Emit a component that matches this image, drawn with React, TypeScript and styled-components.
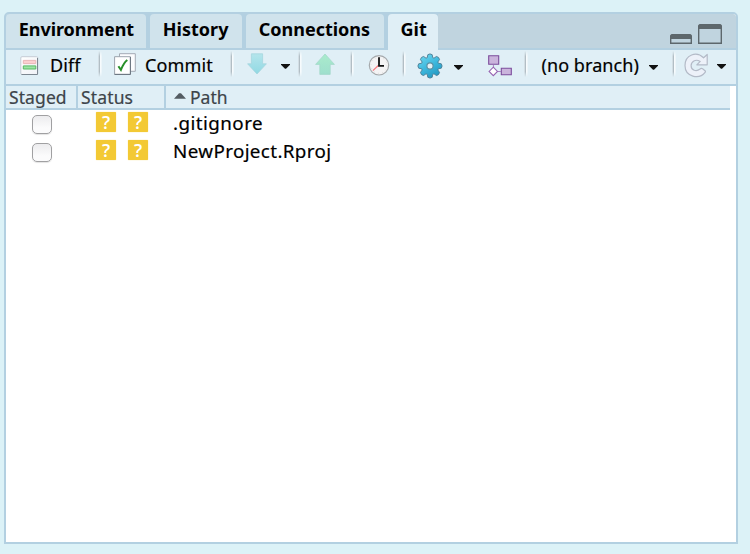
import React from "react";
import styled, { createGlobalStyle } from "styled-components";

const line = "#b3d0e1";
const pale = "#e0eff6";

const GlobalStyle = createGlobalStyle`
  * { box-sizing: border-box; }
  body { margin: 0; background: #dcf2f7; font-family: "Noto Sans", "Open Sans", sans-serif; color: #000; }
`;

const Page = styled.main`
  height: 554px;
  padding: 12px 12px 10px 4px;
  background: #dcf2f7;
  overflow: hidden;
`;

const Panel = styled.section`
  display: flex;
  flex-direction: column;
  height: 532px;
  border: 2px solid ${line};
  border-radius: 5px 5px 0 0;
  background: #fff;
  overflow: hidden;
`;

const TabBar = styled.div`
  display: flex;
  height: 36px;
  background: #c0d4df;
  border-bottom: 2px solid ${line};
`;

const TabList = styled.div`
  display: flex;
  gap: 4px;
  height: 36px;
  background: ${line};
`;

const Tab = styled.div<{ $width: number; $spacing: number; $active?: boolean }>`
  width: ${(p) => p.$width}px;
  height: ${(p) => (p.$active ? 36 : 34)}px;
  padding-left: ${(p) => (p.$active ? 12.5 : 12.7)}px;
  border-radius: 4px 4px 0 0;
  background: ${(p) => (p.$active ? pale : "#d0e3ec")};
  font-size: 18px;
  font-weight: 700;
  line-height: 31px;
  letter-spacing: ${(p) => p.$spacing}px;
  white-space: nowrap;
`;

const WindowControls = styled.div`
  display: flex;
  margin: 8px 14px 0 auto;
`;

const Toolbar = styled.div`
  display: flex;
  height: 36px;
  background: ${pale};
  border-bottom: 2px solid ${line};
`;

const Group = styled.div<{ $width: number; $pad: number }>`
  display: flex;
  flex: none;
  width: ${(p) => p.$width}px;
  height: 32px;
  padding-left: ${(p) => p.$pad}px;
  align-items: flex-start;
`;

const Divider = styled.i`
  flex: none;
  width: 4px;
  height: 26px;
  margin-top: 1px;
  background: linear-gradient(90deg, #d3dee4 0 1px, #b2bec5 1px 2px, #f7fbfd 2px 3px, #edf6fa 3px 4px);
  mask-image: linear-gradient(transparent, #000 20%, #000 80%, transparent);
`;

const ToolLabel = styled.span<{ $left: number; $spacing: number }>`
  margin-left: ${(p) => p.$left}px;
  font-size: 18px;
  line-height: 31px;
  letter-spacing: ${(p) => p.$spacing}px;
  -webkit-text-stroke: 0.2px #000;
  white-space: nowrap;
`;

const Glyph = styled.svg<{ $top: number; $left?: number }>`
  display: block;
  flex: none;
  margin-top: ${(p) => p.$top}px;
  margin-left: ${(p) => p.$left ?? 0}px;
`;

const Header = styled.div`
  display: flex;
  height: 24px;
  margin-right: 6px;
  border-bottom: 2px solid ${line};
  background: ${pale};
`;

const HeaderCell = styled.div<{ $width?: number; $pad: number; $spacing: number }>`
  display: flex;
  gap: 4px;
  width: ${(p) => (p.$width ? `${p.$width}px` : "auto")};
  padding-left: ${(p) => p.$pad}px;
  border-right: ${(p) => (p.$width ? `2px solid ${line}` : "0")};
  color: #3d444a;
  font-size: 17.5px;
  line-height: 22px;
  letter-spacing: ${(p) => p.$spacing}px;
  -webkit-text-stroke: 0.2px #3d444a;
  white-space: nowrap;
`;

const FileRow = styled.div`
  display: flex;
  height: 28px;
`;

const Check = styled.span`
  width: 20px;
  height: 19px;
  margin: 5px 0 0 26px;
  border: 1.5px solid #a0a0a2;
  border-radius: 5px;
  background: linear-gradient(#ececee, #fbfbfc 70%);
  box-shadow: 0 1px 1px #e4e4e4;
`;

const Badges = styled.div`
  display: flex;
  gap: 12px;
  width: 77px;
  margin: 2px 0 0 44px;
`;

const Badge = styled.span`
  width: 20px;
  height: 20px;
  border-radius: 1px;
  background: #f3c934;
  box-shadow: 0 0 1px #f3c934;
  color: #fff;
  font: 600 18px/21px "Open Sans", sans-serif;
  text-align: center;
`;

const FileName = styled.span<{ $spacing: number }>`
  font-size: 18.8px;
  line-height: 27px;
  letter-spacing: ${(p) => p.$spacing}px;
  -webkit-text-stroke: 0.2px #000;
`;

const Caret = ({ left, top = 15 }: { left: number; top?: number }) => (
  <Glyph $top={top} $left={left} width="9" height="5" viewBox="0 0 9 5">
    <path d="M0 0h9v.8L5 4.7H4L0 .8z" fill="#111" />
  </Glyph>
);

const DiffIcon = () => (
  <Glyph $top={6} width="19" height="20" viewBox="0 0 19 20">
    <defs><linearGradient id="paper" x2="1" y2="1"><stop stopColor="#fff" /><stop offset="1" stopColor="#f0f2f7" /></linearGradient></defs>
    <rect x=".8" y=".7" width="17" height="17.8" rx="1.2" fill="url(#paper)" stroke="#c5ccd5" />
    <path d="M1.5 18.5h16V2" fill="none" stroke="#7d8791" />
    <path d="M3.3 4.4h12.5v3.2H3.3z" fill="#fbcfd0" stroke="#e9b6b8" />
    <path d="M3.3 9.9h12.5v3.1H3.3z" fill="#9be4a3" stroke="#58b864" />
  </Glyph>
);

const CommitIcon = () => (
  <Glyph $top={3} width="22" height="22" viewBox="0 0 22 22">
    <path d="M5.5.7h15.8v17.6H5.5z" fill="#fbfcfe" stroke="#a3abb5" />
    <path d="M.6 3.7h15.8v17.7H.6z" fill="#fff" stroke="#9aa3ad" />
    <path d="M.6 21.4h15.8V4" fill="none" stroke="#69737e" />
    <path d="M4.4 13.3l2.5 3.6C8.5 12.8 10.4 9.3 13.3 7" fill="none" stroke="#278f29" strokeWidth="2" />
  </Glyph>
);

const ArrowIcon = ({ up = false }: { up?: boolean }) => (
  <Glyph $top={3} width="20" height="22" viewBox="0 0 20 22">
    <defs>
      <linearGradient id={up ? "upFill" : "downFill"} x2="0" y2="1">
        <stop stopColor={up ? "#aaebcc" : "#b4e5ec"} /><stop offset="1" stopColor={up ? "#9edfcd" : "#91d9e3"} />
      </linearGradient>
    </defs>
    <path
      d={up ? "M10 1l9.4 10.4h-4.2v10H4.8v-10H.6z" : "M4.4.8h11.2v10h3.8L10 21 .6 10.8h3.8z"}
      fill={up ? "url(#upFill)" : "url(#downFill)"} stroke={up ? "#a5d9cc" : "#a5d5de"} strokeWidth=".8" strokeLinejoin="round"
    />
  </Glyph>
);

const ClockIcon = () => (
  <Glyph $top={5} $left={0.5} width="22" height="21" viewBox="0 0 22 21">
    <circle cx="11" cy="10.3" r="9.7" fill="#f4f4f5" stroke="#a5a9ac" strokeWidth="1.2" />
    <circle cx="11" cy="10.3" r="8" fill="none" stroke="#deded9" strokeDasharray="1 3.2" />
    <path d="M10.3 10.5L4.9 15.6" stroke="#f77b80" strokeWidth="1.3" />
    <path d="M11 2.3v8.6h5" fill="none" stroke="#111" strokeWidth="1.8" />
  </Glyph>
);

const teeth = Array.from({ length: 8 }, (_, i) => {
  const at = (r: number, deg: number) => {
    const a = ((i * 45 + deg) * Math.PI) / 180;
    return `${13 + r * Math.sin(a)} ${13 - r * Math.cos(a)}`;
  };
  return `${at(8.8, -18)}L${at(11.5, -11)}Q${at(12.9, 0)} ${at(11.5, 11)}L${at(8.8, 18)}`;
}).join("L");

const GearIcon = () => (
  <Glyph $top={3} width="26" height="26" viewBox="0 0 26 26">
    <defs><linearGradient id="gear" x1=".2" x2=".8" y2="1"><stop stopColor="#6bd6ee" /><stop offset=".5" stopColor="#3db7dc" /><stop offset="1" stopColor="#1f94be" /></linearGradient></defs>
    <path d={`M${teeth}Z`} fill="url(#gear)" stroke="#497d94" strokeWidth=".9" strokeLinejoin="round" />
    <circle cx="13" cy="13" r="3.1" fill="#e4f1f5" stroke="#5d91a5" strokeWidth="1.2" />
  </Glyph>
);

const BranchIcon = () => (
  <Glyph $top={4} $left={24} width="25" height="23" viewBox="0 0 25 23">
    <path d="M6.4 11v3M10.5 17.5h3.3" stroke="#aa83c2" />
    <path d="M1.7 1.7h10v8.6h-10z" fill="#cab4dc" stroke="#7c4c9c" strokeWidth="1.1" />
    <path d="M14.3 14.2h10v6.5h-10z" fill="#cab4dc" stroke="#7c4c9c" strokeWidth="1.1" />
    <path d="M6.3 13.2l4.2 4.2-4.2 4.3-4.2-4.3z" fill="#fff" stroke="#9765b2" strokeWidth="1.1" />
  </Glyph>
);

const RefreshIcon = () => (
  <Glyph $top={3} width="25" height="25" viewBox="0 0 25 25">
    <path
      d="M23.2 1.5v10.3H12.8l3.4-3.4C11.5 5.6 7.1 8.6 7.1 12.7c0 4.6 5.2 6.3 8.9 3.3.9-.8 1.8-.8 2.6-.2l2.4 1.9c.6.5.6 1 .1 1.6C15.3 26.8 1 24.2 1 12.6 1 1.8 12.4-2.2 19.6 4.8z"
      fill="#edf1f9" stroke="#b3bac7" strokeWidth="1.2" strokeLinejoin="round"
    />
  </Glyph>
);

const files = [
  { name: ".gitignore", spacing: 0.45 },
  { name: "NewProject.Rproj", spacing: 0.38 },
];

export default function App() {
  return (
    <Page>
      <GlobalStyle />
      <Panel>
        <TabBar>
          <TabList>
            <Tab $width={140} $spacing={-0.04}>Environment</Tab>
            <Tab $width={92} $spacing={0.03}>History</Tab>
            <Tab $width={138} $spacing={0}>Connections</Tab>
            <Tab $width={50} $spacing={0} $active>Git</Tab>
          </TabList>
          <WindowControls>
            <Glyph $top={12} width="22" height="10" viewBox="0 0 22 10">
              <path d="M.7 9.3V3Q.7.7 3 .7h16Q21.3.7 21.3 3v6.3z" fill="#c0d4df" stroke="#5d676c" strokeWidth="1.4" />
              <path d="M0 5V3Q0 0 3 0h16q3 0 3 3v2z" fill="#5d676c" />
            </Glyph>
            <Glyph $top={2} $left={6} width="24" height="20" viewBox="0 0 24 20">
              <path d="M.7 19.3V3Q.7.7 3 .7h18Q23.3.7 23.3 3v16.3z" fill="#c0d4df" stroke="#5d676c" strokeWidth="1.4" />
              <path d="M0 5V3Q0 0 3 0h18q3 0 3 3v2z" fill="#5d676c" />
            </Glyph>
          </WindowControls>
        </TabBar>
        <Toolbar>
          <Group $width={92} $pad={14}><DiffIcon /><ToolLabel $left={11} $spacing={0.1}>Diff</ToolLabel></Group>
          <Divider />
          <Group $width={128} $pad={12}><CommitIcon /><ToolLabel $left={9} $spacing={0.15}>Commit</ToolLabel></Group>
          <Divider />
          <Group $width={64} $pad={13}><ArrowIcon /><Caret left={14} top={14} /></Group>
          <Divider />
          <Group $width={48} $pad={13}><ArrowIcon up /></Group>
          <Divider />
          <Group $width={48} $pad={13}><ClockIcon /></Group>
          <Divider />
          <Group $width={118} $pad={11}><GearIcon /><Caret left={11} /><BranchIcon /></Group>
          <Divider />
          <Group $width={144} $pad={13}><ToolLabel $left={0.5} $spacing={0.07}>(no branch)</ToolLabel><Caret left={10} /></Group>
          <Divider />
          <Group $width={60} $pad={8}><RefreshIcon /><Caret left={8} top={14} /></Group>
        </Toolbar>
        <Header>
          <HeaderCell $width={72} $pad={3} $spacing={0.1}>Staged</HeaderCell>
          <HeaderCell $width={88} $pad={3} $spacing={0.15}>Status</HeaderCell>
          <HeaderCell $pad={8} $spacing={0}>
            <Glyph $top={7} width="12" height="6" viewBox="0 0 12 6"><path d="M0 5.7L5 .3h2l5 5.4z" fill="#545c62" /></Glyph>
            <span>Path</span>
          </HeaderCell>
        </Header>
        {files.map((file) => (
          <FileRow key={file.name}>
            <Check />
            <Badges><Badge>?</Badge><Badge>?</Badge></Badges>
            <FileName $spacing={file.spacing}>{file.name}</FileName>
          </FileRow>
        ))}
      </Panel>
    </Page>
  );
}
